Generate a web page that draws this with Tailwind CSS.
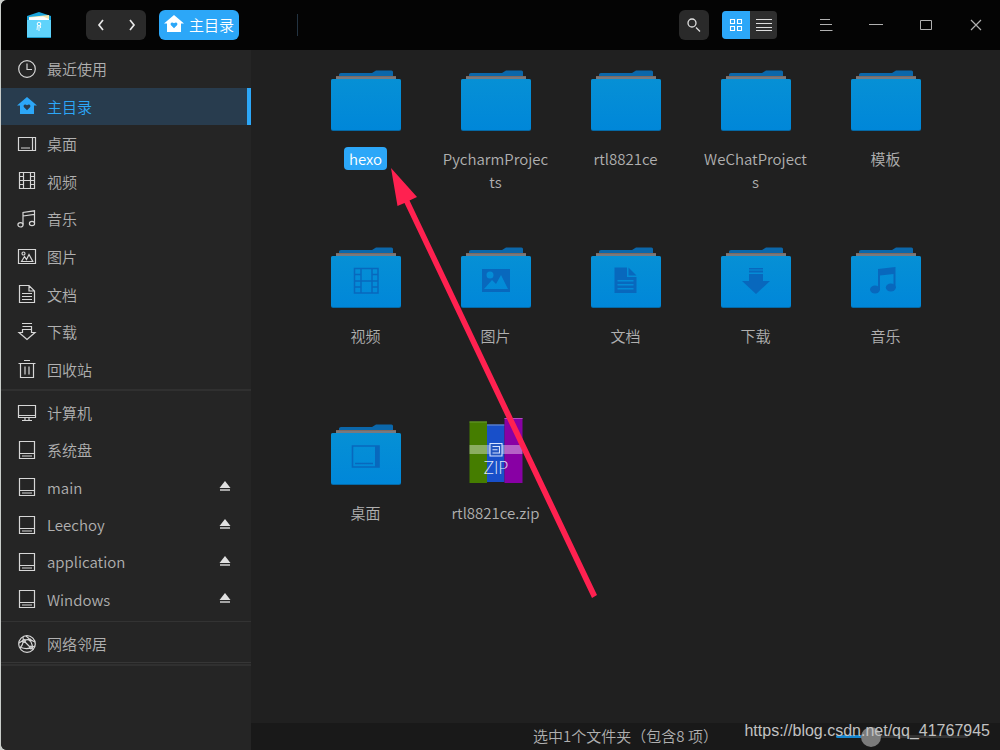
<!DOCTYPE html>
<html lang="zh-CN">
<head>
<meta charset="utf-8">
<title>主目录</title>
<script src="https://cdn.jsdelivr.net/npm/@tailwindcss/browser@4"></script>
</head>
<body class="bg-[#c9cdca] font-['Noto_Sans_CJK_SC',sans-serif] text-[15px] leading-[23px] font-[350] text-[#b0b0b0]">
<svg class="absolute size-0" aria-hidden="true">
  <defs>
    <linearGradient id="face" x1="0" y1="0" x2="0" y2="1"><stop offset="0" stop-color="#0690d5"/><stop offset="1" stop-color="#0087d9"/></linearGradient>
  </defs>
  <symbol id="folder" viewBox="0 0 70 62">
    <path d="M8 6V4.500Q8 3 10 3H41L45 .5H60.500Q62 .5 62 2V6Z" fill="#0b67aa"/>
    <path d="M5 6H65V9H5Z" fill="#777a80"/>
    <path d="M5 6H65V7H5Z" fill="#7f6a60"/>
    <rect x="0" y="9" width="70" height="52" rx="2" fill="#0569a6"/>
    <rect x="0" y="9" width="70" height="51" rx="2" fill="url(#face)"/>
  </symbol>
  <symbol id="clock" viewBox="0 0 20 20"><circle cx="10" cy="10" r="8.300"/><path d="M10 4.500V10.500H15"/></symbol>
  <symbol id="home" viewBox="0 0 20 20"><path fill-rule="evenodd" stroke="none" fill="currentColor" d="M10 1L20 9.500H17V18H3V9.500H0ZM10 14.200L13 11.200C14.300 9.500 12.500 7.300 10 9.200C7.500 7.300 5.700 9.500 7 11.200Z"/></symbol>
  <symbol id="desktop" viewBox="0 0 20 20"><path d="M1.500 3.500H18.500V16.500H1.500ZM15.500 3.500V16.500M4 14H13"/></symbol>
  <symbol id="film" viewBox="0 0 20 20"><path d="M2.500 1.500H17.500V17.500H2.500ZM6.500 1.500V17.500M13.500 1.500V17.500M6.500 9.500H13.500M2.500 5.500H6.500M2.500 9.500H6.500M2.500 13.500H6.500M13.500 5.500H17.500M13.500 9.500H17.500M13.500 13.500H17.500"/></symbol>
  <symbol id="music" viewBox="0 0 20 20"><path d="M6 15.500V3.500L17.500 1.800V14M6 7L17.500 5.300"/><ellipse cx="3.500" cy="15.800" rx="2.600" ry="2.200"/><ellipse cx="15" cy="14.500" rx="2.600" ry="2.200"/></symbol>
  <symbol id="image" viewBox="0 0 20 20"><path d="M1.500 2.500H18.500V16.500H1.500ZM4.500 14.500L7.500 9.500L9.500 12.500L12 7.500L15.800 14.500Z"/><circle cx="6.500" cy="6.500" r="1.500"/></symbol>
  <symbol id="doc" viewBox="0 0 20 20"><path d="M2.500 1.500H12L17.500 7V18.500H2.500ZM12 1.500V7H17.500M5 9.500H15M5 12.500H15M5 15.500H15"/></symbol>
  <symbol id="down" viewBox="0 0 20 20"><path d="M5 1.500H15M5.500 4.500H14.500V10.500H18L10 17.500L2 10.500H5.500V7.500H14.500"/></symbol>
  <symbol id="trash" viewBox="0 0 20 20"><path d="M7 1.500H13M1.500 4.500H18.500M3.500 4.500V18.500H16.500V4.500M8 7.500V15.500M12 7.500V15.500"/></symbol>
  <symbol id="computer" viewBox="0 0 20 20"><path d="M1.500 2.500H18.500V14.500H1.500ZM1.500 12.500H18.500M8 14.500V17M12 14.500V17M5 17.500H15"/></symbol>
  <symbol id="disk" viewBox="0 0 20 20"><path d="M2.500 1.500H17.500V18.500H2.500ZM2.500 13.500H17.500M5 16H15"/></symbol>
  <symbol id="net" viewBox="0 0 20 20"><circle cx="10" cy="10" r="8.300"/><path d="M9 2C12 4 15.500 9 16 16M2 9C7 5 13 5 18 8M3 14C6 11 7 8 6 3M7 7L14 14M4 13.500C9 15.500 13 15 18 12"/><circle cx="7" cy="7" r="1.300" fill="currentColor"/><circle cx="14" cy="13.500" r="1.300" fill="currentColor"/><circle cx="13" cy="6" r=".8"/></symbol>
  <symbol id="eject" viewBox="0 0 12 12"><path d="M6 0L11.500 7H.5Z" fill="#e0e0e0"/><path d="M1 8H11V10H1Z" fill="#a5a5a5"/></symbol>
</svg>

<div class="relative ml-px flex h-screen flex-col overflow-hidden rounded-l-md bg-[#202020]">
  <header class="flex h-[50px] shrink-0 items-center bg-[#040404]">
    <svg class="ml-[26px] h-7 w-6 shrink-0" viewBox="0 0 24 28" aria-label="文件管理器" role="img">
      <path d="M0 5L12 1L24 5V27H0Z" fill="#1aa5dc"/><path d="M2 6L22 4L22 10H2Z" fill="#f5e7ae"/><path d="M2 6.500L16 5.500L22 8V11H2Z" fill="#fff"/>
      <path d="M0 9H24V27H0Z" fill="#5fd3fb"/><path d="M0 26H24V27H0Z" fill="#1b9bcb"/>
      <circle cx="12" cy="13" r="1.800" fill="none" stroke="#fff" stroke-width="1"/><path d="M12 14V20M10.500 14.500L10 19M13.500 14.500V17" fill="none" stroke="#e9faff" stroke-width="1"/>
    </svg>
    <div class="ml-[35px] flex h-[30px] shrink-0 rounded-md bg-[#2a2a2a]">
      <button class="flex w-[30px] items-center justify-center" aria-label="后退"><svg class="size-3" viewBox="0 0 12 12" fill="none" stroke="#e8e8e8" stroke-width="1.700"><path d="M8 1L4 6L8 11"/></svg></button>
      <button class="flex w-[30px] items-center justify-center" aria-label="前进"><svg class="size-3" viewBox="0 0 12 12" fill="none" stroke="#e8e8e8" stroke-width="1.700"><path d="M5 1L9 6L5 11"/></svg></button>
    </div>
    <button class="ml-[13px] flex h-[30px] shrink-0 items-center gap-[5px] rounded-md bg-[#2ca7f8] px-[5px] pb-0.5 text-white"><svg class="size-5"><use href="#home"/></svg>主目录</button>
    <div class="ml-[58px] h-[22px] w-px bg-[#233341]"></div>
    <button class="ml-auto flex size-[30px] items-center justify-center rounded-md bg-[#2a2a2a]" aria-label="搜索"><svg class="size-4" viewBox="0 0 16 16" fill="none" stroke="#e0e0e0" stroke-width="1.300"><circle cx="6" cy="6" r="4"/><path d="M10 10.500L14 14.500"/></svg></button>
    <div class="mr-6 ml-[13px] flex h-7 overflow-hidden rounded bg-[#2e2e2e]">
      <button class="flex w-7 items-center justify-center bg-[#2ca7f8]" aria-label="图标视图"><svg class="size-3.5" viewBox="0 0 14 14" fill="none" stroke="#fff" stroke-width="1.100"><path d="M1.500 1.500H5.500V5.500H1.500ZM8.500 1.500H12.500V5.500H8.500ZM1.500 8.500H5.500V12.500H1.500ZM8.500 8.500H12.500V12.500H8.500Z"/></svg></button>
      <button class="flex w-[27px] items-center justify-center" aria-label="列表视图"><svg class="h-3.5 w-4" viewBox="0 0 16 14" stroke="#dedede" stroke-width="1.200"><path d="M0 1.500H16M0 5.500H16M0 9.500H16M0 12.500H16"/></svg></button>
    </div>
    <div class="-mr-px flex [&>button]:flex [&>button]:h-[50px] [&>button]:w-[50px] [&>button]:items-center [&>button]:justify-center">
      <button aria-label="菜单"><svg class="size-3.5" viewBox="0 0 14 14" stroke="#b0b0b0"><path d="M1 1.500H11M1 6.500H13M1 12.500H13.500"/></svg></button>
      <button aria-label="最小化"><svg class="size-3.5" viewBox="0 0 14 14" stroke="#b0b0b0"><path d="M0 6.500H14"/></svg></button>
      <button aria-label="最大化"><svg class="size-3.5" viewBox="0 0 14 14" fill="none" stroke="#b0b0b0"><path d="M1.500 2.500H12.500V11.500H1.500Z"/></svg></button>
      <button aria-label="关闭"><svg class="size-3.5" viewBox="0 0 14 14" stroke="#b0b0b0" stroke-width="1.200"><path d="M2 2L12 12M12 2L2 12"/></svg></button>
    </div>
  </header>

  <div class="flex min-h-0 flex-1">
    <nav class="w-[250px] shrink-0 bg-[#252525] [&_a]:flex [&_a]:items-center [&_a]:gap-2.5 [&_a]:pl-4 [&_a>svg]:size-5 [&_a>svg]:fill-none [&_a>svg]:stroke-[#d6d6d6] [&_a>svg]:stroke-[1.2]">
      <div class="grid h-[338px] auto-rows-fr">
        <a href="#"><svg><use href="#clock"/></svg>最近使用</a>
        <a href="#" class="border-r-4 border-[#2ca7f8] bg-[#283c4e] text-[#2ca7f8]" aria-current="page"><svg><use href="#home"/></svg>主目录</a>
        <a href="#"><svg><use href="#desktop"/></svg>桌面</a>
        <a href="#"><svg><use href="#film"/></svg>视频</a>
        <a href="#"><svg><use href="#music"/></svg>音乐</a>
        <a href="#"><svg><use href="#image"/></svg>图片</a>
        <a href="#"><svg><use href="#doc"/></svg>文档</a>
        <a href="#"><svg><use href="#down"/></svg>下载</a>
        <a href="#"><svg><use href="#trash"/></svg>回收站</a>
      </div>
      <div class="mt-px mb-[3px] h-0.5 bg-[#303030]"></div>
      <div class="grid h-[224px] auto-rows-fr">
        <a href="#"><svg><use href="#computer"/></svg>计算机</a>
        <a href="#"><svg><use href="#disk"/></svg>系统盘</a>
        <div class="flex items-center justify-between pr-5"><a href="#"><svg><use href="#disk"/></svg>main</a><button aria-label="弹出 main"><svg class="size-3"><use href="#eject"/></svg></button></div>
        <div class="flex items-center justify-between pr-5"><a href="#"><svg><use href="#disk"/></svg>Leechoy</a><button aria-label="弹出 Leechoy"><svg class="size-3"><use href="#eject"/></svg></button></div>
        <div class="flex items-center justify-between pr-5"><a href="#"><svg><use href="#disk"/></svg>application</a><button aria-label="弹出 application"><svg class="size-3"><use href="#eject"/></svg></button></div>
        <div class="flex items-center justify-between pr-5"><a href="#"><svg><use href="#disk"/></svg>Windows</a><button aria-label="弹出 Windows"><svg class="size-3"><use href="#eject"/></svg></button></div>
      </div>
      <div class="my-[3px] h-px bg-[#333333]"></div>
      <a href="#" class="h-[37px]"><svg><use href="#net"/></svg>网络邻居</a>
      <div class="h-1 border-t border-b-2 border-t-[#363636] border-b-[#303030]"></div>
    </nav>

    <div class="flex min-w-0 flex-1 flex-col">
      <main class="grid flex-1 auto-rows-[177px] grid-cols-[repeat(auto-fill,130px)] content-start justify-center pt-5 text-center [&>a]:flex [&>a]:flex-col [&>a]:items-center [&>a]:gap-[15px] [&>a>span]:max-w-[118px] [&>a>span]:px-[5px] [&>a>span]:break-all [&>a>svg]:h-[62px] [&>a>svg]:w-[70px] [&>a>svg]:shrink-0 [&>a>svg]:overflow-visible">
        <a href="#"><svg><use href="#folder"/></svg><span class="rounded bg-[#2ca7f8] text-white">hexo</span></a>
        <a href="#"><svg><use href="#folder"/></svg><span>PycharmProjects</span></a>
        <a href="#"><svg><use href="#folder"/></svg><span>rtl8821ce</span></a>
        <a href="#"><svg><use href="#folder"/></svg><span>WeChatProjects</span></a>
        <a href="#"><svg><use href="#folder"/></svg><span>模板</span></a>
        <a href="#"><svg viewBox="0 0 70 62"><use href="#folder" width="70" height="62"/><path fill="none" stroke="#0868bd" stroke-width="1.500" d="M23.500 21.500H47V46H23.500ZM30 21.500V46M41 21.500V46M30 34H41M23.500 27.500H30M23.500 34H30M23.500 40H30M41 27.500H47M41 34H47M41 40H47"/></svg><span>视频</span></a>
        <a href="#"><svg viewBox="0 0 70 62"><use href="#folder" width="70" height="62"/><path fill="#0868bd" fill-rule="evenodd" d="M21 22H49V45H21ZM23 42L31 33L35 37L40 28L47 42ZM32.500 28A3.500 3.500 0 1 0 25.500 28A3.500 3.500 0 1 0 32.500 28Z"/></svg><span>图片</span></a>
        <a href="#"><svg viewBox="0 0 70 62"><use href="#folder" width="70" height="62"/><path fill="#0868bd" fill-rule="evenodd" d="M23.500 20.500H36V30H45.500V46H23.500ZM37.500 20.500L45.500 28.500H37.500ZM26.500 33H42.500V34.500H26.500ZM26.500 37H42.500V38.500H26.500ZM26.500 41H42.500V42.500H26.500Z"/></svg><span>文档</span></a>
        <a href="#"><svg viewBox="0 0 70 62"><use href="#folder" width="70" height="62"/><path fill="#0868bd" d="M28 21H42V22.500H28ZM28 23.500H42V25.500H28ZM28 27H42V34H49L35 47L21 34H28Z"/></svg><span>下载</span></a>
        <a href="#"><svg viewBox="0 0 70 62"><use href="#folder" width="70" height="62"/><path fill="#0868bd" d="M27 22L44.500 20V41H42.500V27L29 28.500V43H27Z"/><ellipse cx="24" cy="42.500" rx="5" ry="4" fill="#0868bd"/><ellipse cx="39.800" cy="40.500" rx="5" ry="4" fill="#0868bd"/></svg><span>音乐</span></a>
        <a href="#"><svg viewBox="0 0 70 62"><use href="#folder" width="70" height="62"/><path fill="none" stroke="#0868bd" stroke-width="1.600" d="M21.500 22H48V43H21.500ZM24 39.500H42"/><path d="M44 22H48V43H44Z" fill="#0868bd"/></svg><span>桌面</span></a>
        <a href="#"><svg viewBox="0 0 70 62">
          <path d="M8.500 -2.500H26V59H8.500Z" fill="#457d00"/><path d="M8.500 -2.500H26V-1.500H8.500Z" fill="#669a30"/>
          <path d="M26 .5H43.500V58H26Z" fill="#184fc9"/><path d="M26 .5H43.500V1.500H26Z" fill="#7392cf"/>
          <path d="M43.500 -6H61.500V59H43.500Z" fill="#8800a4"/><path d="M43.500 -6H61.500V-5H43.500Z" fill="#b14dbf"/>
          <path d="M8.500 21H61.500V30H8.500Z" fill="#fff" opacity=".38"/>
          <path d="M29 19.500H41V32H29Z" fill="#2456c0" stroke="#d6e2ff" stroke-width="1.100"/><path d="M31.500 22.500H38.500V29H31.500M31.500 25.700H36.500" fill="none" stroke="#d6e2ff" stroke-width="1.100"/>
          <text x="35" y="49.500" text-anchor="middle" fill="#dfe4f4" class="font-[Lato,sans-serif] text-[17px] font-light">ZIP</text>
        </svg><span>rtl8821ce.zip</span></a>
      </main>
      <footer class="relative flex h-[27px] shrink-0 items-center justify-center bg-[#191919]">
        <span class="pb-0.5">选中1个文件夹（包含8 项）</span>
        <input type="range" aria-label="图标大小" value="22" class="absolute right-8 h-[3px] w-[132px] appearance-none rounded bg-linear-to-r from-[#1684cc] from-25% to-[#333333] to-25% [&::-webkit-slider-thumb]:size-5 [&::-webkit-slider-thumb]:appearance-none [&::-webkit-slider-thumb]:rounded-full [&::-webkit-slider-thumb]:bg-[#7b7b7b]">
      </footer>
    </div>
  </div>

  <p class="pointer-events-none absolute right-2.5 bottom-[7px] font-['Liberation_Sans',sans-serif] text-base font-normal text-[#c2c2c2]">https://blog.csdn.net/qq_41767945</p>
  <svg class="pointer-events-none absolute top-[168px] left-[390px] h-[430px] w-[208px]" viewBox="0 0 208 430" fill="#ff2150" aria-hidden="true"><path d="M0 0L26 29L18.500 32.500L206 427L201 430L13.500 35L6.500 38Z"/></svg>
</div>
</body>
</html>
